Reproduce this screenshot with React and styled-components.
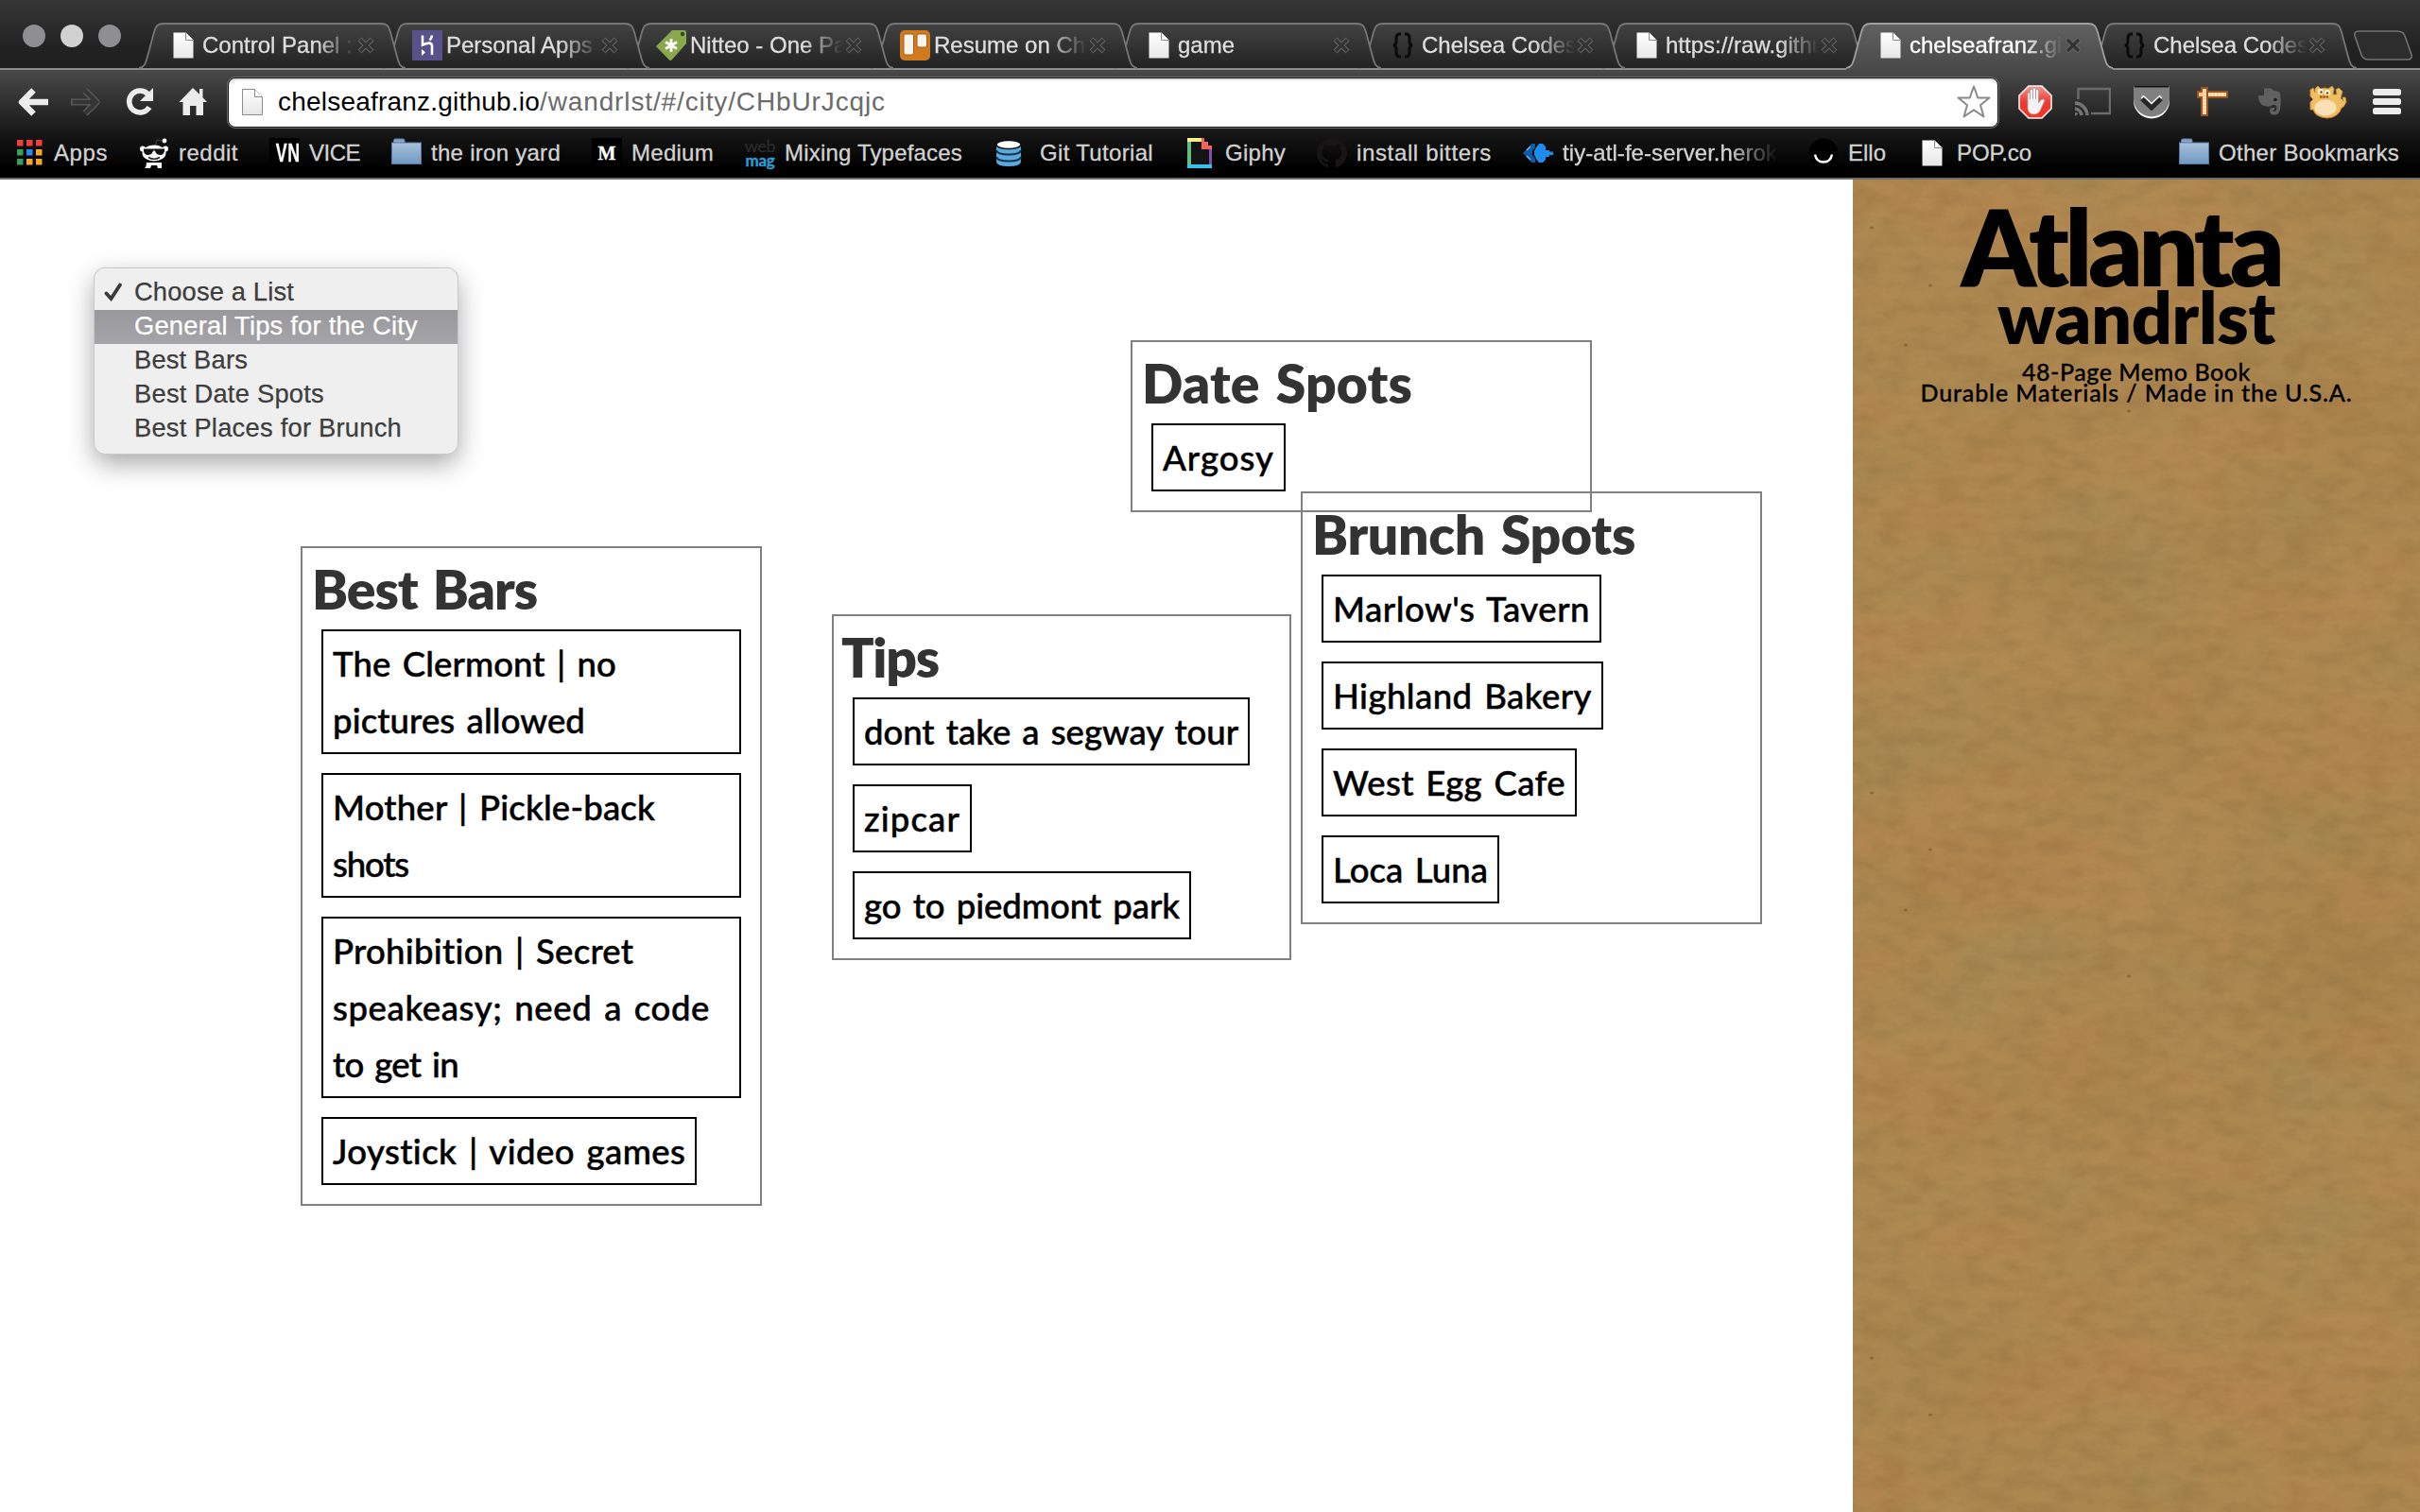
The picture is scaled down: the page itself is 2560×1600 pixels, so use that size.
import React, { useLayoutEffect, useRef, useState } from "react";
import styled, { createGlobalStyle, css } from "styled-components";

const GlobalStyle = createGlobalStyle`
  * { box-sizing: border-box; }
  body { margin: 0; background: #fff; overflow: hidden; }
`;

const SANS = `"Liberation Sans", Arial, sans-serif`;
const GEO = `Lato, "Open Sans", sans-serif`;

/* ---------- tracked text ---------- */

const Tracked = styled.span`
  display: block;
  width: max-content;
  white-space: pre;
`;

// Spreads the letters so that the line takes up the given width.
function Fit({ w, children }) {
  const ref = useRef(null);
  const [spacing, setSpacing] = useState(0);
  useLayoutEffect(() => {
    const natural = ref.current.getBoundingClientRect().width;
    setSpacing((w - natural) / children.length);
  }, [w, children]);
  return (
    <Tracked ref={ref} style={{ letterSpacing: `${spacing}px` }}>
      {children}
    </Tracked>
  );
}

/* ---------- layout ---------- */

const Screen = styled.div`
  display: flex;
  flex-direction: column;
  width: 2560px;
  height: 1600px;
  overflow: hidden;
  font-family: ${SANS};
`;

const TabStrip = styled.div`
  display: flex;
  align-items: flex-end;
  height: 74px;
  border-bottom: 2px solid #8c8c8c;
  background: linear-gradient(#373737, #222 70%, #1f1f1f);
`;

const Lights = styled.div`
  display: flex;
  gap: 16px;
  width: 171px;
  padding-left: 24px;
  padding-bottom: 22px;
`;

const Light = styled.span`
  width: 24px;
  height: 24px;
  border-radius: 50%;
  background: ${(p) => (p.$bright ? "#d1d1d1" : "#8f8e93")};
`;

const TabBox = styled.div`
  display: grid;
  width: 282px;
  height: 50px;
  margin-left: -24px;
  margin-bottom: -2px;
  position: relative;
  z-index: ${(p) => p.$z};
  > * { grid-area: 1 / 1; }
`;

const TabBody = styled.div`
  display: flex;
  align-items: center;
  height: 48px;
  padding-left: 31px;
  font-size: 24px;
  color: ${(p) => (p.$active ? "#fff" : "#dedede")};
  svg { flex: none; }
`;

const TabTitle = styled.div`
  width: 162px;
  margin: 0 1px 0 4px;
  line-height: 30px;
  white-space: pre;
  overflow: hidden;
  -webkit-text-stroke: 0.3px currentColor;
  mask-image: linear-gradient(to right, #000 74%, transparent 100%);
`;

const NewTab = styled.svg`
  margin: 0 0 8px -4px;
`;

const Toolbar = styled.div`
  display: flex;
  align-items: center;
  height: 62px;
  padding-top: 5px;
  background: linear-gradient(#494949, #1b1b1b);
`;

const NavButtons = styled.div`
  display: flex;
  align-items: center;
  justify-content: space-between;
  width: 205px;
  margin: 0 19px 0 17px;
`;

const Omnibox = styled.div`
  display: flex;
  align-items: center;
  width: 1873px;
  height: 53px;
  margin-top: 1px;
  padding: 0 6px 0 9px;
  border: 1px solid #151515;
  border-radius: 8px;
  background: #fff;
  box-shadow: 0 0 0 1px #6e6e6e, inset 0 2px 1px #ddd;
  font-size: 28px;
`;

const Url = styled.div`
  display: flex;
  flex: 1;
  margin-left: 11px;
  color: #6b6b6b;
`;

const UrlHost = styled.span`
  color: #000;
`;

const Extensions = styled.div`
  display: flex;
  align-items: center;
  flex: 1;
  padding-left: 20px;
`;

const ExtSlot = styled.span`
  display: flex;
  width: ${(p) => p.$w}px;
`;

const Bookmarks = styled.div`
  display: flex;
  align-items: center;
  gap: 33px;
  height: 54px;
  padding: 0 22px 1px 15px;
  border-bottom: 2px solid #6c6c6c;
  background: linear-gradient(#1a1a1a, #000 80%);
  font-size: 24px;
  color: #d2d2d2;
  box-shadow: inset 0 -1px #000;
`;

const Bookmark = styled.div`
  display: flex;
  align-items: center;
  gap: ${(p) => p.$gap || 10}px;
  -webkit-text-stroke: 0.3px currentColor;
  svg { flex: none; }
  ${(p) => p.$last && css`margin-left: auto;`}
  ${(p) => p.$fade && css`
    ${Tracked} { mask-image: linear-gradient(to right, #000 78%, transparent 100%); }
  `}
`;

const Page = styled.main`
  display: flex;
  flex: 1;
  min-height: 0;
`;

const Board = styled.section`
  position: relative;
  width: 1960px;
  background: #fff;
`;

/* ---------- board ---------- */

const Card = styled.article`
  position: absolute;
  left: ${(p) => p.$x}px;
  top: ${(p) => p.$y}px;
  display: flex;
  flex-direction: column;
  width: ${(p) => p.$w}px;
  padding-bottom: 20px;
  border: 2px solid #808080;
  font-family: ${GEO};
`;

const CardTitle = styled.h2`
  height: 86px;
  margin: 0;
  padding-left: ${(p) => p.$pad}px;
  font-size: 57px;
  font-weight: 800;
  line-height: 87px;
  word-spacing: 4px;
  color: #333;
`;

const Items = styled.div`
  display: flex;
  flex-direction: column;
  align-items: flex-start;
  gap: 20px;
  padding-left: 20px;
`;

const Item = styled.div`
  min-width: ${(p) => (p.$wide ? "444px" : "0")};
  padding: 4px 10px;
  border: 2px solid #000;
  font-size: 36.5px;
  font-weight: 500;
  line-height: 60px;
  word-spacing: 3px;
  color: #000;
  -webkit-text-stroke: 0.5px #000;
`;

const Menu = styled.ul`
  position: absolute;
  left: 100px;
  top: 94px;
  display: flex;
  flex-direction: column;
  width: 384px;
  height: 196px;
  margin: 0;
  padding: 8px 0 0;
  list-style: none;
  border-radius: 11px;
  background: #efefef;
  box-shadow: 0 0 0 1px #c9c9c9, 0 10px 28px rgba(0, 0, 0, 0.36);
  overflow: visible;
  font-size: 27.3px;
  color: #3d3d3d;
`;

const MenuItem = styled.li`
  display: grid;
  grid-template-columns: 42px 1fr;
  align-items: center;
  height: 36px;
  padding-bottom: 2px;
  line-height: 34px;
  -webkit-text-stroke: 0.25px currentColor;
  ${(p) => p.$on && css`
    background: linear-gradient(#98979c, #a5a4a9);
    color: #fff;
  `}
`;

/* ---------- notebook cover ---------- */

const Cover = styled.aside`
  display: grid;
  width: 600px;
  overflow: hidden;
  background: #a9834c;
  > * { grid-area: 1 / 1; }
`;

const CoverText = styled.div`
  display: flex;
  flex-direction: column;
  align-items: center;
  padding-top: 10px;
  font-family: ${GEO};
  color: #000;
  position: relative;
`;

const City = styled.h1`
  margin: 0;
  padding-right: 33px;
  font-size: 112px;
  font-weight: 800;
  line-height: 120px;
`;

const Brand = styled.h2`
  margin: 0 0 31px;
  font-size: 75px;
  font-weight: 800;
  line-height: 31px;
`;

const Caption = styled.p`
  margin: 0;
  font-size: 25px;
  font-weight: 500;
  line-height: 22px;
  -webkit-text-stroke: 0.3px #000;
`;

/* ---------- icons ---------- */

const Doc = ({ stroke = "none" }) => (
  <svg width="32" height="32" viewBox="0 0 32 32">
    <defs>
      <linearGradient id="sheet" x1="0" y1="0" x2="0" y2="1">
        <stop offset="0" stopColor="#fff" />
        <stop offset="1" stopColor="#e6e6e6" />
      </linearGradient>
    </defs>
    <path d="M5.500 2.500H18.500L26.500 10.500V29.500H5.500Z" fill="url(#sheet)" stroke={stroke} />
    <path d="M18.500 2.500V10.500H26.500" fill="#fff" stroke="#8b8b8b" />
  </svg>
);

const Heroku = () => (
  <svg width="32" height="32" viewBox="0 0 32 32">
    <rect width="32" height="32" fill="#56528a" />
    <path d="M11 5.500V15.500Q20 11.500 21 16V26M21 5.500Q20.500 8.500 18.500 10.500" fill="none" stroke="#fff" strokeWidth="2.600" />
    <path d="M10 20L14 23.500L10 27Z" fill="#fff" />
  </svg>
);

const Envato = () => (
  <svg width="32" height="32" viewBox="0 0 32 32">
    <path d="M17 0H30Q32 0 32 3V14L17 31Q15 33 13.500 31L0 17Z" fill="#89a84e" />
    <circle cx="28" cy="4" r="2.200" fill="#39471f" />
    <path d="M16 9V23M10 12.500L22 19.500M22 12.500L10 19.500" stroke="#fff" strokeWidth="2.800" />
  </svg>
);

const Trello = () => (
  <svg width="32" height="32" viewBox="0 0 32 32">
    <rect width="32" height="32" rx="5" fill="#d07a20" />
    <rect x="4" y="4" width="10.500" height="22" rx="2" fill="#f8f4ee" stroke="#a85c10" />
    <rect x="18" y="4" width="10.500" height="14" rx="2" fill="#f8f4ee" stroke="#a85c10" />
  </svg>
);

const Braces = () => (
  <svg width="32" height="32" viewBox="0 0 32 32">
    <path d="M14 4H13Q9 4 9 8V12Q9 15.500 6 16Q9 16.500 9 20V24Q9 28 13 28H14M18 4H19Q23 4 23 8V12Q23 15.500 26 16Q23 16.500 23 20V24Q23 28 19 28H18" fill="none" stroke="#0b0b0b" strokeWidth="3" />
  </svg>
);

const CloseX = () => (
  <svg width="20" height="20" viewBox="0 0 20 20">
    <path d="M3.500 3.500L16.500 16.500M16.500 3.500L3.500 16.500" stroke="#646464" strokeWidth="5.400" />
    <path d="M4 4L16 16M16 4L4 16" stroke="#333" strokeWidth="3.200" />
  </svg>
);

const AppsIcon = () => {
  const colors = ["#f03e3a", "#f03e3a", "#f03e3a", "#35a05a", "#2f86ee", "#f2a62a", "#35a05a", "#f2a62a", "#f2a62a"];
  return (
    <svg width="32" height="32" viewBox="0 0 32 32">
      {colors.map((c, i) => (
        <rect key={i} x={3 + (i % 3) * 10} y={2 + Math.floor(i / 3) * 10} width="6.500" height="6.500" fill={c} />
      ))}
    </svg>
  );
};

const Reddit = () => (
  <svg width="32" height="32" viewBox="0 0 32 32">
    <path d="M17 9L19 2L25 3" fill="none" stroke="#333" strokeWidth="1.500" />
    <circle cx="27" cy="3" r="2.400" fill="#fff" />
    <circle cx="4" cy="11.500" r="3" fill="#fff" /><circle cx="28" cy="11.500" r="3" fill="#fff" />
    <ellipse cx="16" cy="16" rx="12.500" ry="8.500" fill="#fff" />
    <path d="M5 11.500H27V14Q26 18.500 22 18Q18 17.500 17 13.500H15Q14 17.500 10 18Q6 18.500 5 14Z" fill="#111" />
    <path d="M10 20.500Q16 24 22 20.500" fill="none" stroke="#222" strokeWidth="1.500" />
    <path d="M8 26H24V32H20L19 29H13L12 32H6Q8 30 8 26Z" fill="#fff" />
  </svg>
);

const Badge = styled.span`
  display: grid;
  place-items: center;
  width: 32px;
  height: 32px;
  background: #000;
  color: #fff;
  font: ${(p) => p.$font};
`;

const VnText = styled.span`
  transform: scaleX(0.66);
  letter-spacing: 1px;
`;

const Folder = () => (
  <svg width="32" height="32" viewBox="0 0 32 32">
    <defs>
      <linearGradient id="folder" x1="0" y1="0" x2="0" y2="1">
        <stop offset="0" stopColor="#a9c2dc" />
        <stop offset="1" stopColor="#6f97c0" />
      </linearGradient>
    </defs>
    <path d="M2.500 6V2.500Q2.500 1 4 1H12.500Q14 1 14 2.500V6" fill="#88a5c6" stroke="#5d7fa5" />
    <rect x=".5" y="5" width="31" height="22.500" fill="url(#folder)" stroke="#547aa3" />
  </svg>
);

const WebMag = styled.span`
  display: flex;
  flex-direction: column;
  align-items: center;
  width: 32px;
  height: 32px;
  font: 18px/16px ${GEO};
  letter-spacing: -0.3px;
  color: #2b2b2b;
  b { color: #2d9fd6; margin-top: -1px; font-size: 17px; line-height: 17px; }
`;

const Database = () => (
  <svg width="32" height="32" viewBox="0 0 32 32">
    <path d="M3 7V25Q3 30 16 30Q29 30 29 25V7Z" fill="#5aaadd" />
    <ellipse cx="16" cy="7" rx="13" ry="4.600" fill="#fff" stroke="#111" strokeWidth="1.500" />
    <path d="M3 13Q4 17.500 16 17.500Q28 17.500 29 13M3 20Q4 24.500 16 24.500Q28 24.500 29 20" fill="none" stroke="#173247" strokeWidth="2" />
  </svg>
);

const Giphy = () => (
  <svg width="32" height="32" viewBox="0 0 32 32">
    <path d="M7 4H19V12H26V28H7Z" fill="#141414" />
    <path d="M3 0H18V4H3Z" fill="#fff08a" />
    <path d="M3 4H7V28H3Z" fill="#62bf80" />
    <path d="M3 28H29V32H3Z" fill="#35c3f3" />
    <path d="M26 12H29V28H26Z" fill="#7b4fae" />
    <path d="M18 0H21V4H25V8H29V12H18Z" fill="#f4625f" />
  </svg>
);

const Github = () => (
  <svg width="32" height="32" viewBox="0 0 16 16">
    <path fill="#171515" d="M8 0C3.580 0 0 3.580 0 8c0 3.540 2.290 6.530 5.470 7.590.4.070.55-.17.55-.38 0-.19-.01-.82-.01-1.490-2.010.37-2.530-.49-2.690-.94-.09-.23-.48-.94-.82-1.130-.28-.15-.68-.52-.01-.53.63-.01 1.080.58 1.230.82.72 1.210 1.870.87 2.330.66.070-.52.28-.87.51-1.070-1.780-.2-3.640-.89-3.640-3.950 0-.87.31-1.590.82-2.150-.08-.2-.36-1.020.08-2.120 0 0 .67-.21 2.200.82.64-.18 1.320-.27 2-.27s1.360.09 2 .27c1.530-1.040 2.200-.82 2.200-.82.44 1.100.16 1.920.08 2.120.51.56.82 1.270.82 2.150 0 3.070-1.870 3.750-3.650 3.950.29.25.54.73.54 1.480 0 1.070-.01 1.930-.01 2.200 0 .21.15.46.55.38A8.010 8.010 0 0 0 16 8c0-4.420-3.580-8-8-8z" />
  </svg>
);

const Diamond = () => (
  <svg width="32" height="32" viewBox="0 0 32 32">
    <path d="M9 6H13V10L10 14V18L13 22V26H9L6 22L3 19L0 16L3 13L6 10Z" fill="#0d5aa6" />
    <path d="M17 6H21L24 9V13H28V14.500H32V18H28V20H24V23L21 26H17L14 22L12 18V14L14 10Z" fill="#1e8cec" />
    <path d="M4 13L8 9M4 19L8 23" stroke="#7bb4ea" strokeWidth="1.500" />
  </svg>
);

const Ello = () => (
  <svg width="32" height="32" viewBox="0 0 32 32">
    <circle cx="16" cy="16" r="15.500" fill="#000" />
    <path d="M7 17.500Q8.500 25.500 16 25.500Q23.500 25.500 25 17.500" fill="none" stroke="#fff" strokeWidth="2.400" />
  </svg>
);

const BackIcon = () => (
  <svg width="36" height="36" viewBox="0 0 36 36">
    <path d="M18.500 5.500L6 18L18.500 30.500M7 18H34" fill="none" stroke="#ececec" strokeWidth="6.400" strokeLinejoin="round" />
  </svg>
);

const ForwardIcon = () => (
  <svg width="36" height="36" viewBox="0 0 36 36">
    <path d="M17 6L29 18L17 30M28 18H2" fill="none" stroke="#5c5c5c" strokeWidth="7" strokeLinejoin="round" />
    <path d="M17 6L29 18L17 30M28 18H3.500" fill="none" stroke="#363636" strokeWidth="4.500" />
  </svg>
);

const ReloadIcon = () => (
  <svg width="36" height="36" viewBox="0 0 36 36">
    <path d="M26.500 9.500A11.500 11.500 0 1 0 28 23.500" fill="none" stroke="#ececec" strokeWidth="5.600" />
    <path d="M32 3V17H18Z" fill="#ececec" />
  </svg>
);

const HomeIcon = () => (
  <svg width="36" height="36" viewBox="0 0 36 36">
    <path d="M18 3L25 9.800V4H28.500V13.200L33 18H29V32H21.500V22H15V32H7.500V18H3.500Z" fill="#ececec" />
  </svg>
);

const Star = () => (
  <svg width="38" height="38" viewBox="0 0 38 38">
    <path d="M19 2.500L23.300 14.500H35.500L26 22.200L29.500 34.500L19 27.400L8.500 34.500L12 22.200L2.500 14.500H14.700Z" fill="#fff" stroke="#8a8a8a" strokeWidth="2" strokeLinejoin="round" />
  </svg>
);

const AdBlock = () => (
  <svg width="38" height="38" viewBox="0 0 38 38">
    <defs>
      <linearGradient id="stop" x1="0" y1="0" x2="0" y2="1">
        <stop offset="0" stopColor="#ef9a92" /><stop offset=".5" stopColor="#ee3a30" /><stop offset="1" stopColor="#f23527" />
      </linearGradient>
    </defs>
    <path d="M12 2H26L36 12V26L26 36H12L2 26V12Z" fill="url(#stop)" stroke="#f3f3f3" strokeWidth="1.600" />
    <path d="M11 20V10Q12.200 8 13.500 10V16V6.500Q15 4.500 16.500 6.500V15.500V5Q18 3 19.500 5V15.500V6.500Q21 4.500 22.500 6.500V20Q24 16.500 27 16Q29.500 16 28.500 18.500L25 26Q23 32 17.500 32Q12 32 11 26Z" fill="#f3f3f3" stroke="#a9a0a0" strokeWidth=".8" />
  </svg>
);

const Cast = () => (
  <svg width="38" height="38" viewBox="0 0 38 38">
    <path d="M3.500 16V5H37V31H17" fill="none" stroke="#6b6b6b" strokeWidth="2.400" />
    <path d="M0 31.500A3 3 0 0 1 2 32.500M0 26A8 8 0 0 1 7 33M0 20A13.500 13.500 0 0 1 13 33" fill="none" stroke="#747474" strokeWidth="3.600" />
  </svg>
);

const Pocket = () => (
  <svg width="40" height="38" viewBox="0 0 40 38">
    <path d="M1 5Q1 3 3 3H37Q39 3 39 5V18A19 18.500 0 0 1 1 18Z" fill="#fff" />
    <path d="M1 4Q1 1.500 3 1.500H37Q39 1.500 39 4V16A19 18.500 0 0 1 1 16Z" fill="#808080" />
    <path d="M2 2.500H38" stroke="#161616" strokeWidth="2" />
    <path d="M10 13L20 22.500L30 13" fill="none" stroke="#fff" strokeWidth="4" />
    <path d="M10 15.500L20 25L30 15.500" fill="none" stroke="#262626" strokeWidth="5" />
  </svg>
);

const Ruler = () => (
  <svg width="34" height="34" viewBox="0 0 34 34">
    <path d="M1 6H32V12H11V31H5V12H1Z" fill="#f3c692" stroke="#995520" strokeWidth="2" />
    <path d="M5 6V2H11V12" fill="#f3c692" stroke="#995520" strokeWidth="2" />
    <path d="M12 9H31M8 4V30" stroke="#fbe6c8" strokeWidth="3" strokeDasharray="2 1.500" />
  </svg>
);

const Evernote = () => (
  <svg width="28" height="32" viewBox="0 0 28 32">
    <path d="M8 1.500H14Q17 1.500 18 4Q24 4 25 7Q26 12 25.500 20Q25 29 20 29.500Q14 30 14 25Q14 22 17 22H19V24.500H17.500Q17 26 18.500 26Q21.500 26 21.500 22Q21 18 17 19Q14 22 8 20Q2 18 2 9H8Z" fill="#606060" />
    <path d="M2 8L8 1.500V8Z" fill="#353535" />
    <circle cx="20" cy="13.500" r="1.800" fill="#1e1e1e" />
  </svg>
);

const Gremlin = () => (
  <svg width="40" height="36" viewBox="0 0 40 36">
    <path d="M6 4L9 1L12 4Q16 2 20 4L24 1L26 4L25 10L29 10L28 5L31 3L35 7L33 14L36 17L35 13L38 13L39 18L36 23L34 24Q31 34 19 35Q6 34 4 26L1 26V18L4 15L1 12V5L4 3L6 8Z" fill="#efbd62" stroke="#c58b34" strokeWidth="1" />
    <ellipse cx="17" cy="24" rx="11.500" ry="8.500" fill="#fbdfb6" />
    <circle cx="12" cy="7" r="3" fill="#fff6dc" /><circle cx="19" cy="8" r="3" fill="#fff6dc" />
    <circle cx="12.500" cy="7.500" r="1.200" fill="#6c461b" /><circle cx="19" cy="8.500" r="1.200" fill="#6c461b" />
    <path d="M11 12.500H20" stroke="#a2591f" strokeWidth="2.500" strokeDasharray="2.500 .8" />
  </svg>
);

const Hamburger = () => (
  <svg width="34" height="32" viewBox="0 0 34 32">
    {[2, 12, 22].map((y) => (
      <rect key={y} x="2" y={y} width="30" height="7" rx="2.500" fill="#ececec" />
    ))}
  </svg>
);

const Check = () => (
  <svg width="20" height="20" viewBox="0 0 20 20">
    <path d="M2.500 11.500L7.500 17L17 2.500" fill="none" stroke="#3a3a3a" strokeWidth="3.800" strokeLinecap="round" />
  </svg>
);

const CheckCell = styled.span`
  display: flex;
  padding-left: 10px;
`;

const Kraft = () => (
  <svg width="600" height="1410">
    <filter id="blotch" x="0" y="0" width="100%" height="100%" colorInterpolationFilters="sRGB">
      <feTurbulence type="fractalNoise" baseFrequency="0.005 0.009" numOctaves="4" seed="8" />
      <feColorMatrix values="0.08 0 0 0 0.642  0 0.04 0 0 0.511  0 0.04 0 0 0.295  0 0 0 0 1" />
    </filter>
    <filter id="grain" x="0" y="0" width="100%" height="100%" colorInterpolationFilters="sRGB">
      <feTurbulence type="fractalNoise" baseFrequency="0.035 0.07" numOctaves="4" seed="3" />
      <feColorMatrix values="0 0 0 0 0.30  0 0 0 0 0.21  0 0 0 0 0.06  0.8 0 0 0 -0.28" />
    </filter>
    <rect width="600" height="1410" filter="url(#blotch)" />
    <rect width="600" height="1410" filter="url(#grain)" opacity=".28" />
    {[[20, 51], [82, 112], [56, 175], [292, 245], [20, 649], [82, 709], [56, 773], [292, 843], [20, 1247], [82, 1307]].map(([x, y]) => (
      <ellipse key={`${x}-${y}`} cx={x} cy={y} rx="2.200" ry="1.500" fill="#5c4423" opacity=".4" />
    ))}
  </svg>
);

/* ---------- data ---------- */

const TABS = [
  [Doc, "Control Panel :"],
  [Heroku, "Personal Apps |"],
  [Envato, "Nitteo - One Page"],
  [Trello, "Resume on Chrome"],
  [Doc, "game"],
  [Braces, "Chelsea Codes H"],
  [Doc, "https://raw.github"],
  [Doc, "chelseafranz.git"],
  [Braces, "Chelsea Codes H"],
];
const ACTIVE = 7;

const EXTENSIONS = [
  [AdBlock, 61],
  [Cast, 61],
  [Pocket, 68],
  [Ruler, 63],
  [Evernote, 56],
  [Gremlin, 65],
  [Hamburger, 34],
];

const BOOKMARKS = [
  [<AppsIcon />, "Apps", 57],
  [<Reddit />, "reddit", 63],
  [<Badge $font={`bold 27px/32px ${SANS}`}><VnText>VN</VnText></Badge>, "VICE", 54],
  [<Folder />, "the iron yard", 137],
  [<Badge $font={`bold 20px/32px "Liberation Serif", serif`}>M</Badge>, "Medium", 87],
  [<WebMag>web<b>mag</b></WebMag>, "Mixing Typefaces", 188],
  [<Database />, "Git Tutorial", 120, 17],
  [<Giphy />, "Giphy", 64, 11],
  [<Github />, "install bitters", 143],
  [<Diamond />, "tiy-atl-fe-server.herok", 227],
  [<Ello />, "Ello", 40],
  [<Doc />, "POP.co", 79],
];

const CARDS = [
  {
    title: "Best Bars", x: 318, y: 388, w: 488, pad: 10, tw: 238, items: [
      [["The Clermont | no", 300], ["pictures allowed", 267]],
      [["Mother | Pickle-back", 341], ["shots", 80]],
      [["Prohibition | Secret", 319], ["speakeasy; need a code", 399], ["to get in", 133]],
      [["Joystick | video games", 374]],
    ],
  },
  {
    title: "Tips", x: 880, y: 460, w: 486, pad: 8, tw: 103, items: [
      [["dont take a segway tour", 396]],
      [["zipcar", 102]],
      [["go to piedmont park", 334]],
    ],
  },
  {
    title: "Date Spots", x: 1196, y: 170, w: 488, pad: 10, tw: 286, items: [[["Argosy", 118]]],
  },
  {
    title: "Brunch Spots", x: 1376, y: 330, w: 488, pad: 10, tw: 342, items: [
      [["Marlow's Tavern", 272]],
      [["Highland Bakery", 274]],
      [["West Egg Cafe", 246]],
      [["Loca Luna", 164]],
    ],
  },
];

const OPTIONS = [
  ["Choose a List", 169],
  ["General Tips for the City", 300],
  ["Best Bars", 120],
  ["Best Date Spots", 201],
  ["Best Places for Brunch", 283],
];

/* ---------- page ---------- */

const TAB_EDGE = "M0 48C6 47 7 43 9 36L16 10C18 3 20 1 26 1H256C262 1 264 3 266 10L273 36C275 43 276 47 282 48";

function Tab({ icon: Icon, title, index }) {
  const active = index === ACTIVE;
  return (
    <TabBox $z={active ? 20 : 10 - index}>
      <svg width="282" height="50" viewBox="0 0 282 50">
        <defs>
          <linearGradient id={`tab${index}`} x1="0" y1="0" x2="0" y2="1">
            <stop offset="0" stopColor={active ? "#616161" : "#424242"} />
            <stop offset="1" stopColor={active ? "#494949" : "#232323"} />
          </linearGradient>
        </defs>
        <path d={`${TAB_EDGE}${active ? "V50H0" : ""}Z`} fill={`url(#tab${index})`} />
        <path d={TAB_EDGE} fill="none" stroke={active ? "#a0a0a0" : "#767676"} strokeWidth="1.800" />
      </svg>
      <TabBody $active={active}>
        <Icon />
        <TabTitle>{title}</TabTitle>
        <CloseX />
      </TabBody>
    </TabBox>
  );
}

export default function App() {
  return (
    <Screen>
      <GlobalStyle />
      <TabStrip>
        <Lights><Light /><Light $bright /><Light /></Lights>
        {TABS.map(([icon, title], i) => <Tab key={i} icon={icon} title={title} index={i} />)}
        <NewTab width="64" height="32" viewBox="0 0 64 32">
          <path d="M6 1H47Q53 1 55 6L62 26Q63 31 58 31H17Q11 31 9 26L2 6Q1 1 6 1Z" fill="#2d2d2d" stroke="#727272" strokeWidth="1.600" />
        </NewTab>
      </TabStrip>
      <Toolbar>
        <NavButtons><BackIcon /><ForwardIcon /><ReloadIcon /><HomeIcon /></NavButtons>
        <Omnibox>
          <Doc stroke="#8b8b8b" />
          <Url>
            <UrlHost><Fit w={277}>chelseafranz.github.io</Fit></UrlHost>
            <Fit w={366}>/wandrlst/#/city/CHbUrJcqjc</Fit>
          </Url>
          <Star />
        </Omnibox>
        <Extensions>
          {EXTENSIONS.map(([Icon, w], i) => <ExtSlot key={i} $w={w}><Icon /></ExtSlot>)}
        </Extensions>
      </Toolbar>
      <Bookmarks>
        {BOOKMARKS.map(([icon, label, w, gap], i) => (
          <Bookmark key={label} $gap={gap} $fade={i === 9}>{icon}<Fit w={w}>{label}</Fit></Bookmark>
        ))}
        <Bookmark $last><Folder /><Fit w={191}>Other Bookmarks</Fit></Bookmark>
      </Bookmarks>
      <Page>
        <Board>
          {CARDS.map((c) => (
            <Card key={c.title} $x={c.x} $y={c.y} $w={c.w}>
              <CardTitle $pad={c.pad}><Fit w={c.tw}>{c.title}</Fit></CardTitle>
              <Items>
                {c.items.map((lines) => (
                  <Item key={lines[0][0]} $wide={lines.length > 1}>
                    {lines.map(([t, w]) => <Fit key={t} w={w}>{t}</Fit>)}
                  </Item>
                ))}
              </Items>
            </Card>
          ))}
          <Menu>
            {OPTIONS.map(([label, w], i) => (
              <MenuItem key={label} $on={i === 1}>
                <CheckCell>{i === 0 && <Check />}</CheckCell>
                <Fit w={w}>{label}</Fit>
              </MenuItem>
            ))}
          </Menu>
        </Board>
        <Cover>
          <Kraft />
          <CoverText>
            <City><Fit w={338}>Atlanta</Fit></City>
            <Brand><Fit w={294}>wandrlst</Fit></Brand>
            <Caption><Fit w={242}>48-Page Memo Book</Fit></Caption>
            <Caption><Fit w={457}>Durable Materials / Made in the U.S.A.</Fit></Caption>
          </CoverText>
        </Cover>
      </Page>
    </Screen>
  );
}
